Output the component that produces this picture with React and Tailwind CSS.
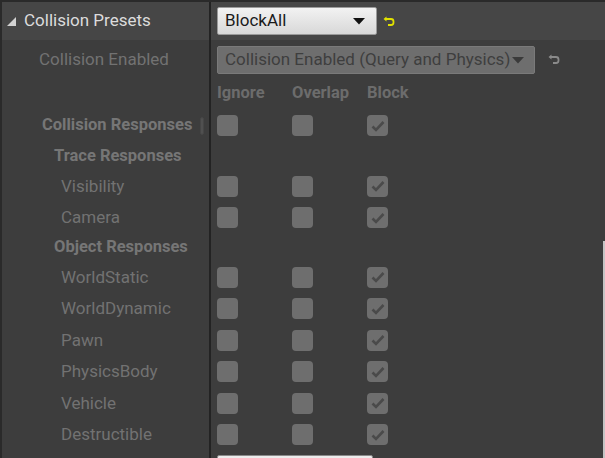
import React from 'react';

const traceRows = ['Visibility', 'Camera'];
const objectRows = ['WorldStatic', 'WorldDynamic', 'Pawn', 'PhysicsBody', 'Vehicle', 'Destructible'];

const ResetIcon = ({ color }) => (
  <svg width="12" height="12" viewBox="0 0 12 12" fill="none">
    <path d="M3 3 H8 Q10.5 3 10.5 5.5 V6.5 Q10.5 9 8 9 H5" stroke={color} strokeWidth="1.8" />
    <path d="M0.5 3 L3.5 0.5 V5.5 Z" fill={color} />
  </svg>
);

const Box = ({ checked }) => (
  <div className="w-[21px] h-[21px] rounded-[4px] bg-[#6e6e6e] flex items-center justify-center">
    {checked && (
      <svg width="14" height="12" viewBox="0 0 14 12">
        <path d="M1.5 6.5 L5 10 L12.5 2" stroke="#4a4a4a" strokeWidth="2.6" fill="none" />
      </svg>
    )}
  </div>
);

const CheckRow = ({ label, indent, bold, h }) => (
  <div className={`flex ${h}`}>
    <div className={`w-[209px] shrink-0 border-r-2 border-[#232323] flex items-center ${indent} relative`}>
      <span className={bold ? 'text-[16.5px] font-bold text-[#767676]' : 'text-[17px] text-[#727272]'}>{label}</span>
    </div>
    <div className="flex-1 flex items-center pl-[6px]">
      <div className="w-[75px]"><Box /></div>
      <div className="w-[75px]"><Box /></div>
      <div className="w-[75px]"><Box checked /></div>
    </div>
  </div>
);

const SubHeader = ({ label, h }) => (
  <div className={`flex ${h}`}>
    <div className="w-[209px] shrink-0 border-r-2 border-[#232323] flex items-center pl-[52px]">
      <span className="text-[16.5px] font-bold text-[#767676]">{label}</span>
    </div>
    <div className="flex-1" />
  </div>
);

export default function App() {
  return (
    <div className="w-[605px] h-[458px] bg-[#3d3d3d] border-t-2 border-l-2 border-[#2a2a2a] relative overflow-hidden font-['Roboto',sans-serif]">
      {/* Collision Presets */}
      <div className="flex h-[38px] bg-[#464646]">
        <div className="w-[209px] shrink-0 border-r-2 border-[#232323] flex items-center pl-[4px]">
          <svg width="11" height="11" viewBox="0 0 11 11" className="mr-[7px]">
            <path d="M10 1 V10 H1 Z" fill="#d2d2d2" />
          </svg>
          <span className="text-[17px] text-[#dcdcdc]">Collision Presets</span>
        </div>
        <div className="flex-1 flex items-center pl-[6px]">
          <div className="w-[160px] h-[28px] rounded-[2px] border border-[#9a9a9a] bg-gradient-to-b from-[#f2f2f2] to-[#d8d8d8] flex items-center justify-between pl-[7px] pr-[11px]">
            <span className="text-[17px] text-[#1a1a1a]">BlockAll</span>
            <svg width="12" height="7" viewBox="0 0 12 7"><path d="M0 0 H12 L6 6.5 Z" fill="#111" /></svg>
          </div>
          <div className="ml-[6px] mt-[1px]"><ResetIcon color="#e0e000" /></div>
        </div>
      </div>

      {/* Collision Enabled */}
      <div className="flex h-[40px]">
        <div className="w-[209px] shrink-0 border-r-2 border-[#232323] flex items-center pl-[37px]">
          <span className="text-[17px] text-[#727272]">Collision Enabled</span>
        </div>
        <div className="flex-1 flex items-center pl-[6px]">
          <div className="w-[318px] h-[28px] rounded-[2px] border border-[#7a7a7a] bg-[#6e6e6e] flex items-center justify-between pl-[7px] pr-[10px]">
            <span className="text-[17px] text-[#3e3e3e] whitespace-nowrap">Collision Enabled (Query and Physics)</span>
            <svg width="12" height="7" viewBox="0 0 12 7" className="shrink-0"><path d="M0 0 H12 L6 6.5 Z" fill="#3a3a3a" /></svg>
          </div>
          <div className="ml-[13px]"><ResetIcon color="#8a8a8a" /></div>
        </div>
      </div>

      {/* Column headers */}
      <div className="flex h-[30px]">
        <div className="w-[209px] shrink-0 border-r-2 border-[#232323]" />
        <div className="flex-1 flex items-center pl-[6px] pb-[4px] text-[16.5px] font-bold text-[#6c6c6c]">
          <div className="w-[75px]">Ignore</div>
          <div className="w-[75px]">Overlap</div>
          <div className="w-[75px]">Block</div>
        </div>
      </div>

      <div className="relative">
        <CheckRow label="Collision Responses" indent="pl-[40px]" bold h="h-[31.5px]" />
        <div className="absolute left-[198px] top-[7px] w-[4px] h-[18px] rounded-full bg-[#505050] border border-[#464646]" />
      </div>
      <SubHeader label="Trace Responses" h="h-[29px]" />
      {traceRows.map((r) => (
        <CheckRow key={r} label={r} indent="pl-[59px]" h="h-[31.5px]" />
      ))}
      <SubHeader label="Object Responses" h="h-[28px]" />
      {objectRows.map((r) => (
        <CheckRow key={r} label={r} indent="pl-[59px]" h="h-[31.5px]" />
      ))}
      <div className="flex h-[20px]">
        <div className="w-[209px] shrink-0 border-r-2 border-[#232323]" />
        <div className="flex-1 pl-[6px] pt-[4px]">
          <div className="w-[156px] h-[20px] rounded-[2px] border border-[#8a8a8a] bg-[#ececec]" />
        </div>
      </div>

      {/* scrollbar edge */}
      <div className="absolute right-0 top-[239px] w-[2px] h-[230px] bg-[#c4c4c4]" />
    </div>
  );
}
